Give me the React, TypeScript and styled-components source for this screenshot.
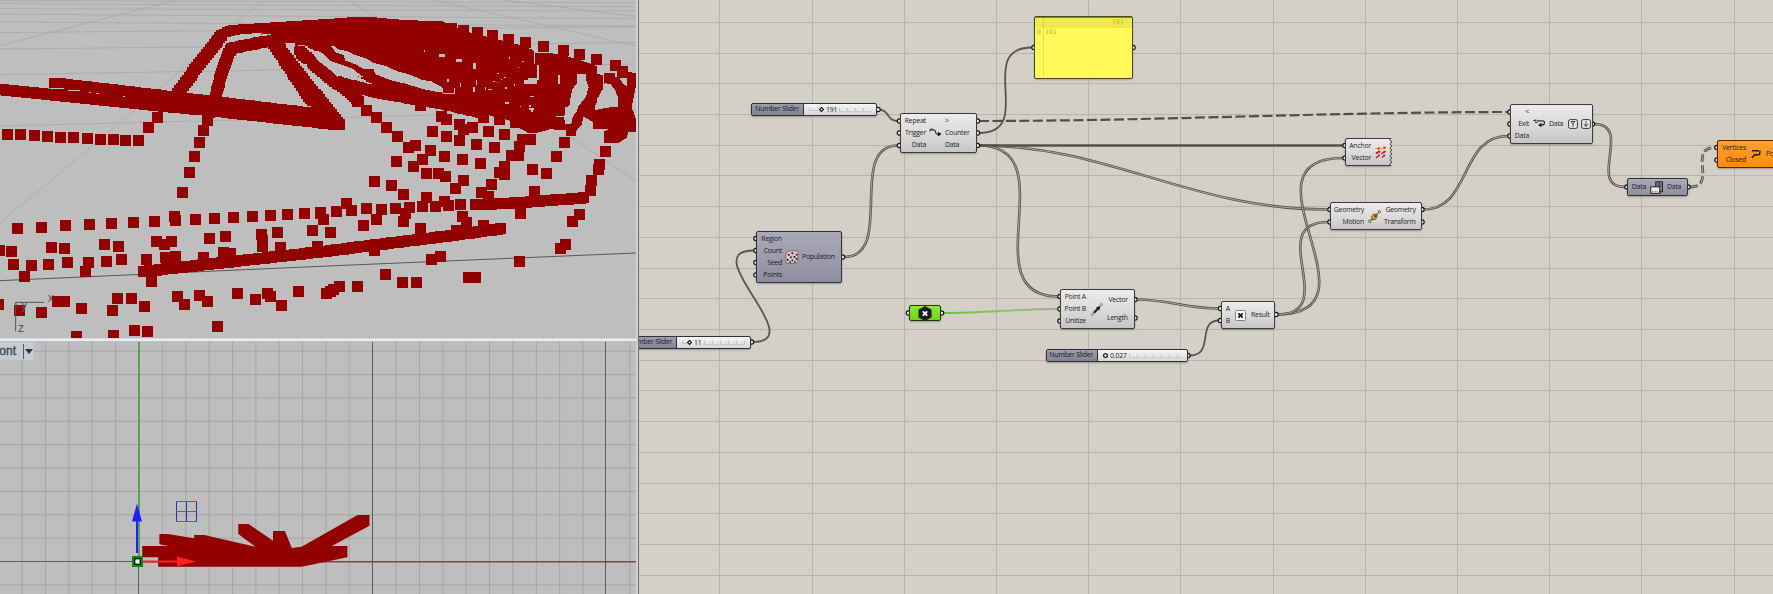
import React from "react";
import styled, { createGlobalStyle, css } from "styled-components";

const GlobalStyle = createGlobalStyle`
  html, body { margin: 0; padding: 0; overflow: hidden; }
  body { background: #d4d0c8; font-family: "Open Sans", "Noto Sans", sans-serif; }
`;

const Screen = styled.div`
  display: flex;
  width: 1773px;
  height: 594px;
  overflow: hidden;
`;

const Viewports = styled.div`
  display: flex;
  flex-direction: column;
  flex: none;
  width: 636px;
  border-right: 2px solid #cfd3da;
  background: #bebebe;
`;

const PerspectiveView = styled.div`
  height: 338px;
  flex: none;
  overflow: hidden;
  border-bottom: 1px solid #d3d7df;
  svg { display: block; }
`;

const FrontView = styled.div`
  flex: 1;
  overflow: hidden;
  position: relative;
  border-top: 2px solid #e9edf5;
  svg { display: block; }
`;

const ViewTab = styled.div`
  position: absolute;
  left: 0;
  top: 1px;
  display: flex;
  align-items: center;
  width: 34px;
  height: 18px;
  background: #c5cad3;
  border-radius: 0 0 3px 0;
  color: #46484d;
  font: 12px "Liberation Sans", Arial, sans-serif;
  -webkit-text-stroke: 0.4px #46484d;
`;

const TabName = styled.span`
  width: 16px;
  margin-right: 7px;
  display: flex;
  justify-content: flex-end;
  white-space: nowrap;
`;

const TabArrow = styled.span`
  height: 15px;
  border-left: 1px solid #55585e;
  display: flex;
  align-items: center;
  &::after {
    content: "";
    margin-left: 1px;
    border: 4px solid transparent;
    border-top: 5px solid #333;
    border-bottom: 0;
  }
`;

const Canvas = styled.div`
  position: relative;
  flex: 1;
  overflow: hidden;
  border-left: 1px solid #6c6c6c;
  background: #d4d0c8;
`;

const Stage = styled.div`
  position: absolute;
  left: -639px;
  top: 0;
  width: 1773px;
  height: 594px;
`;

const WireLayer = styled.svg`
  position: absolute;
  left: 0;
  top: 0;
`;

type Tone = "light" | "selected" | "warning" | "green";

const tones = {
  light: css`background: linear-gradient(#ececec, #d8d8d8 60%, #c6c6c6); border-color: #3c3c3c;`,
  selected: css`background: linear-gradient(#a9a9b7, #9a9aaa 60%, #8d8d9d); border-color: #30303a;`,
  warning: css`background: linear-gradient(#ffa02c, #ff8c10); border-color: #6b1a00;`,
  green: css`background: linear-gradient(#8ee83a, #6fd414); border-color: #1e3a05;`,
};

const NodeBox = styled.div<{ $x: number; $y: number; $w: number; $h: number; $tone: Tone; $cols: string }>`
  position: absolute;
  box-sizing: border-box;
  left: ${(p) => p.$x}px;
  top: ${(p) => p.$y}px;
  width: ${(p) => p.$w}px;
  height: ${(p) => p.$h}px;
  display: grid;
  grid-template-columns: ${(p) => p.$cols};
  align-items: center;
  border: 1px solid;
  border-radius: 2px;
  box-shadow: 0 1px 2px rgba(0, 0, 0, 0.28);
  ${(p) => tones[p.$tone]}
`;

const Params = styled.div<{ $align: "flex-start" | "flex-end" }>`
  display: flex;
  flex-direction: column;
  align-items: ${(p) => p.$align};
`;

const Param = styled.span<{ $h?: number }>`
  height: ${(p) => p.$h ?? 12.2}px;
  line-height: ${(p) => p.$h ?? 12.2}px;
  font-size: 6.9px;
  letter-spacing: -0.22px;
  color: #1d1d1d;
  white-space: nowrap;
`;

const IconSlot = styled.div`
  display: flex;
  justify-content: center;
  svg { display: block; overflow: visible; }
`;

const Toggles = styled.div`
  display: flex;
  gap: 3px;
  margin-left: 5px;
`;

const Row = styled.div`
  display: flex;
  align-items: center;
`;

const SliderBox = styled.div<{ $x: number; $y: number; $w: number }>`
  position: absolute;
  box-sizing: border-box;
  left: ${(p) => p.$x}px;
  top: ${(p) => p.$y}px;
  width: ${(p) => p.$w}px;
  height: 13px;
  display: flex;
  border: 1px solid #303036;
  border-radius: 2px;
  background: linear-gradient(#f6f6f6, #d6d6d6);
  box-shadow: 0 1px 2px rgba(0, 0, 0, 0.28);
`;

const SliderName = styled.div<{ $w: number }>`
  flex: none;
  box-sizing: border-box;
  width: ${(p) => p.$w}px;
  padding-right: 4px;
  display: flex;
  justify-content: flex-end;
  border-right: 1px solid #303036;
  background: linear-gradient(#9c9cad, #82828f);
  font-size: 6.9px;
  letter-spacing: -0.22px;
  line-height: 10.5px;
  color: #1b1b20;
  white-space: nowrap;
`;

const SliderTrack = styled.div`
  flex: 1;
  display: flex;
  align-items: center;
  padding: 0 5px;
  svg { flex: none; }
`;

const SliderValue = styled.span`
  font-size: 6.9px;
  letter-spacing: -0.15px;
  line-height: 10px;
  color: #222;
  margin: 0 2px 0 2px;
`;

const Ruler = styled.div`
  flex: 1;
  height: 3px;
  border-bottom: 1px solid #cacaca;
  background: repeating-linear-gradient(90deg, #c0c0c0 0 1px, transparent 1px 8px);
`;

const YellowPanel = styled.div`
  position: absolute;
  box-sizing: border-box;
  left: 1034px;
  top: 16px;
  width: 99px;
  height: 63px;
  border: 1px solid #4a4718;
  border-radius: 2px;
  background: linear-gradient(90deg, transparent 8px, #e6e150 8px 9px, transparent 9px), #fff95a;
  box-shadow: 0 1px 2px rgba(0, 0, 0, 0.2);
  font: 6.6px "DejaVu Sans Mono", monospace;
  color: #c2bb3c;
`;

const PanelHead = styled.div`
  height: 11px;
  line-height: 8px;
  padding-right: 8px;
  text-align: right;
  background: rgba(160, 150, 0, 0.16);
  border-top: 1px solid #85803a;
  box-sizing: border-box;
`;

const PanelLine = styled.div`
  padding-left: 2px;
  line-height: 8px;
  white-space: pre;
`;

/* ---------- perspective point cloud, in thirds of a pixel ---------- */

type Pt = [number, number];
const RED = "#930000";
const GREY = "#bebebe";

const leftPoints: Pt[] = [
  [472,352],[445,382],[22,403],[61,403],[103,406],[142,409],[181,412],[220,412],[262,415],[301,418],[340,418],[376,421],[415,421],
  [622,362],[610,391],[598,427],[583,469],[568,517],[547,577],
  [52,685],[124,682],[196,676],[268,673],[334,670],[400,667],[463,664],[523,649],[526,661],[586,658],[643,655],[700,652],[757,649],[811,646],[862,643],[913,640],[961,637],
  [-2,751],[34,754],[154,742],[193,745],[313,733],[355,739],[469,724],[493,733],[514,724],[628,715],[676,709],[784,703],[787,720],[787,740],[832,697],[938,690],
  [40,793],[94,796],[145,793],[202,787],[265,787],[256,814],[319,784],[364,778],[73,829],[439,778],[454,844],[497,772],[526,769],[610,772],[670,757],[690,760],[841,742],[952,740],
  [-5,912],[58,932],[124,938],[172,904],[193,904],[244,925],[352,895],[394,895],[337,931],[433,919],[229,1009],[340,1006],[403,991],[442,994],
  [532,889],[553,913],[598,886],[622,904],[712,880],[766,898],[802,880],[811,889],[844,916],[895,874],[652,979],
];

const rightPoints: Pt[] = [
  [353,80],[395,84],[430,91],[473,97],[517,107],[565,118],[616,127],[670,139],[730,151],[778,163],[829,178],[886,197],[908,213],[868,236],
  [113,305],[140,330],[170,352],[200,381],[232,408],[265,442],[286,435],[331,451],[307,478],[280,499],[229,484],[319,520],[355,520],[376,529],[430,541],[406,565],
  [365,350],[380,357],[418,373],[430,387],[457,382],[337,394],[379,409],[418,421],[505,394],[553,403],[469,433],[523,442],[373,469],[427,478],[481,490],
  [163,544],[214,556],[250,583],[319,592],[514,553],[484,577],[505,588],[552,500],[537,518],[553,522],[575,465],[594,465],[598,440],[607,418],[630,418],
  [637,508],[679,520],[709,469],[733,427],[643,573],[601,640],[778,643],[757,664],[736,733],[721,745],[598,784],[361,769],[334,778],[196,823],[247,847],[289,847],[445,832],[466,832],[112,859],[58,859],[40,868],[20,880],[30,873],
  [79,610],[94,631],[49,634],[139,625],[184,628],[169,658],[226,625],[268,622],[255,640],[250,664],[307,619],[346,619],[373,604],[385,615],[421,613],[427,650],[438,668],[490,676],[31,697],[130,676],[0,640],[10,658],[301,685],[163,752],[410,690],
  [302,317],[855,453],[838,493],[834,507],[815,542],[811,570],[636,382],[655,376],[585,367],[538,357],[490,352],
];

const sweeps: Pt[][] = [
  [[-10,266],[480,316],[630,330],[1018,373]],
  [[161,248],[660,306],[920,337],[1018,373]],
  [[532,278],[600,185],[664,104],[700,90],[960,74],[1085,65],[1180,73],[1310,80]],
  [[645,290],[665,210],[692,143],[800,122],[960,115]],
  [[622,345],[645,290]],
  [[815,122],[935,303],[1000,370]],
  [[830,125],[839,150],[912,243],[975,320],[1018,373]],
  [[896,152],[945,194],[1010,248],[1050,275],[1073,302]],
  [[896,152],[945,194],[1015,247],[1130,275],[1170,283],[1330,310],[1440,335]],
  [[930,120],[1010,172],[1090,213],[1170,258],[1330,292],[1440,318],[1560,350],[1690,372]],
  [[1425,613],[1560,606],[1750,592]],
  [[428,813],[960,754],[1330,708],[1500,685]],
];

const massShapes = [
  "790,110 960,62 1085,50 1185,60 1330,66 1400,95 1560,135 1600,150 1610,200 1600,230 1615,250 1620,360 1440,330 1350,290 1340,282 1190,235 1010,155 905,130",
];

const farShape =
  "955,158 1010,168 1055,182 1100,198 1100,222 1118,225 1118,268 1102,296 1097,320 1140,322 1165,322 1165,295 1155,270 1140,250 1122,250 1122,220 1155,220 1155,230 1190,232 1182,212 1217,220 1217,262 1205,322 1217,355 1217,395 1195,397 1190,415 1165,428 1122,428 1122,395 1135,388 1088,388 1088,365 1060,350 1055,375 1040,390 1038,408 1008,408 1008,390 960,388 930,396 895,398 850,375 850,160";

const gaps = [
  "243,150 270,155 285,165 300,182 340,196 370,207 385,220 400,231 355,226 320,230 300,210 262,180",
  "303,138 312,138 325,148 350,153 368,162 408,176 435,190 465,197 500,213 540,224 578,240 604,244 640,264 640,278 610,274 575,266 530,252 480,240 435,222 432,208 400,206 375,192 345,182 342,165 318,158",
  "1040,222 1068,222 1068,240 1076,262 1068,290 1046,318 1040,334 1028,350 1024,372 1006,372 1002,352 975,350 1005,346 1005,322 1018,318 1022,290 1027,268 1040,250",
  "1126,250 1143,252 1150,270 1160,290 1163,320 1140,322 1095,330 1095,320 1105,296 1118,290",
  "1168,234 1192,234 1190,258 1180,252",
];

const holes: [number, number, number, number][] = [
  [1316,162,20,9],[1368,177,18,8],[1419,188,8,18],[1340,237,6,10],[1330,278,34,4],[1362,264,3,16],[1380,250,4,10],[1419,261,6,14],
  [1601,160,4,32],[1610,196,6,38],[1584,233,34,8],[1572,241,40,12],[1514,306,14,5],[1586,315,6,6],[1587,325,16,4],[1592,329,8,7],[1674,225,5,26],
  [1272,150,3,6],[1455,262,3,8],[1465,267,10,3],[1492,218,4,5],[1527,170,3,6],[1567,183,4,4],[1516,262,4,4],[1543,252,3,5],
  [1478,243,8,3],[1490,246,4,3],[1502,236,5,3],[1512,230,6,3],[1554,200,3,3],[1560,318,3,3],[1428,240,3,14],[1590,288,12,3],
];

const DOT = 33;

function dotPath([x, y]: Pt) {
  return `M${x - DOT / 2} ${y - DOT / 2}h${DOT}v${DOT}h${-DOT}z`;
}

function sweepPath(points: Pt[]) {
  let d = "";
  for (let i = 0; i < points.length - 1; i++) {
    const [x1, y1] = points[i];
    const [x2, y2] = points[i + 1];
    const n = Math.max(1, Math.ceil(Math.hypot(x2 - x1, y2 - y1) / 10));
    for (let k = 0; k <= n; k++) {
      d += dotPath([Math.round((x1 + ((x2 - x1) * k) / n) / 3) * 3 + 1, Math.round((y1 + ((y2 - y1) * k) / n) / 3) * 3 + 1]);
    }
  }
  return d;
}

const horizon: [number, number][] = [[2, 8], [11, 20], [26, 33], [42, 56], [66, 78], [98, 80], [147, 128], [224, 192], [378, 330]];

function PointCloud() {
  return (
    <svg width="636" height="338" viewBox="0 0 1908 1014">
      <g stroke="#aaaaaa" strokeWidth="2.6" fill="none">
        {horizon.map(([a, b]) => <path key={a} d={`M0 ${a}L1908 ${b}`} />)}
        <path d="M0 668L275 440L790 0M0 137L530 0M1045 0L1125 50M1300 0L1908 138M1510 0L1908 50M1710 410L1908 543" />
      </g>
      <path d="M0 842L960 799L1908 759" stroke="#585858" strokeWidth="3" fill="none" />
      <g fill={RED} shapeRendering="crispEdges">
        {massShapes.map((m) => <polygon key={m} points={m} />)}
        <polygon points={farShape} transform="translate(690 0)" />
        {sweeps.map((s, i) => <path key={i} d={sweepPath(s)} />)}
        <path d={leftPoints.map(dotPath).join("")} />
        <path d={rightPoints.map(([x, y]) => dotPath([x + 960, y])).join("")} />
      </g>
      <g fill={GREY} shapeRendering="crispEdges">
        {holes.map(([x, y, w, h]) => <rect key={`${x}-${y}`} x={x} y={y} width={w} height={h} />)}
        <g transform="translate(690 0)">
          {gaps.map((g) => <polygon key={g} points={g} />)}
        </g>
        <path d="M150 265h42v3h-42zM205 270h36v3h-36zM266 277h8v3h-8zM288 279h8v3h-8zM368 289h8v3h-8zM918 318h14v3h-14z" />
        <path d="M680 124L682 112L715 104L785 98L785 103L720 115Z" />
        <path d="M855 129h29v12h-9v12h-6v-8h-7z" />
        <path d="M883 166h4v6h-4zM890 176h4v6h-4zM900 184h4v6h-4zM908 192h12v8h-12z" />
      </g>
      <g stroke="#555" strokeWidth="3" fill="none">
        <path d="M47 994V907H132" />
        <path d="M47 910L60 922" strokeWidth="2" />
      </g>
      <g fill="#555" fontFamily="Liberation Sans, Arial, sans-serif" fontSize="36">
        <text x="143" y="905">x</text>
        <text x="64" y="926">y</text>
        <text x="54" y="996">z</text>
      </g>
    </svg>
  );
}

/* ---------- front view ---------- */

const FRONT_STEP = 23.37;

function FrontDrawing() {
  const cols = Array.from({ length: 27 }, (_, i) => i - 5).filter((i) => i % 10 !== 0);
  const rows = Array.from({ length: 11 }, (_, i) => i - 9).filter((i) => i !== 0);
  return (
    <svg width="636" height="253" viewBox="0 341 636 253">
      <g stroke="#a6a6a6" strokeWidth="1">
        {cols.map((i) => <line key={i} x1={139 + i * FRONT_STEP} x2={139 + i * FRONT_STEP} y1="342" y2="594" />)}
        {rows.map((i) => <line key={i} x1="0" x2="636" y1={561.5 + i * FRONT_STEP} y2={561.5 + i * FRONT_STEP} />)}
      </g>
      <path d="M372.5 342V594M605.5 342V594M138.5 562V594M0 561.5H138" stroke="#5c5c5c" fill="none" />
      <path d="M139 342V561" stroke="#3f9a3a" strokeWidth="1.6" />
      <path d="M139 561.7H636" stroke="#8a4141" strokeWidth="1.6" />
      <polygon
        fill={RED}
        transform="translate(0 330) scale(0.4087 0.33333)"
        points="390,612 410,612 475,625 475,615 500,615 625,650 583,612 583,582 608,582 668,632 668,603 697,603 714,654 738,650 875,555 904,555 904,587 812,648 850,648 850,682 738,710 387,710 387,682 348,682 348,648 412,648 390,643"
      />
      <path d="M176.5 501.5V521.5M186.5 501.5V521.5M196.5 501.5V521.5" stroke="#3028c4" fill="none" />
      <path d="M176 501.5H197M176 511.5H197M176 521.5H197" stroke="#d8324a" fill="none" />
      <path d="M137 553V520" stroke="#2020ff" strokeWidth="2" />
      <path d="M137 503.5L142 521.5H132Z" fill="#2020ff" />
      <path d="M143 561.5H180" stroke="#ff2020" strokeWidth="2" />
      <path d="M196 561.5L177 566.5V556.5Z" fill="#ff2020" />
      <rect x="133" y="557" width="9" height="9" fill="#fff" stroke="#078a07" strokeWidth="2" />
      <rect x="134.700" y="558.700" width="5.600" height="5.600" fill="#fff" stroke="#0c1a0c" strokeWidth="1.400" />
    </svg>
  );
}

/* ---------- wires ---------- */

const doubleWires = [
  "M844 257C896 257 846 145.5 898 145.5",
  "M979 145.5C1110 145.5 1190 209.5 1328 209.5",
  "M979 145.5C1068 145.5 970 296.5 1058 296.5",
  "M1136 299.5C1170 299.5 1185 308.5 1219 308.5",
  "M1277 314.5C1388 314.5 1232 158 1343 158",
  "M1277 314.5C1342 314.5 1263 222 1328 222",
  "M1423 209.5C1472 209.5 1459 136 1508 136",
  "M1594 124C1634 124 1586 187 1625 187",
];
const singleWires = [
  "M878 109.5C890 109.5 886 121 898 121",
  "M752 342C812 342 694 250.5 754 250.5",
  "M979 133C1037 133 974 47.5 1032 47.5",
  "M1190 355.5C1215 355.5 1196 320.5 1219 320.5",
];

const ports: Pt[] = [
  [878,109.5],[899.5,121],[899.5,133],[899.5,145.5],[977.5,121],[977.5,133],[977.5,145.5],
  [756,238.5],[756,250.5],[756,262.5],[756,275],[842.5,257],[751.5,342],[908.5,313],[941.5,313],
  [1034,47.5],[1133,47.5],[1060,296.5],[1060,309],[1060,321],[1135,299.5],[1135,318],
  [1220.5,308.5],[1220.5,320.5],[1276,314.5],[1188,355.5],[1345,145.5],[1345,158],[1330,209.5],[1330,222],[1422,209.5],[1422,222],
  [1510,112],[1510,124],[1510,136],[1592.5,124],[1627,187],[1688,187],[1717,147.5],[1717,160],
];

function Wires() {
  const cols = Array.from({ length: 12 }, (_, i) => Math.round(719.3 + i * 92.2) + 0.5);
  const rows = Array.from({ length: 19 }, (_, i) => Math.floor(22.3 + i * 30.72) + 0.5);
  return (
    <WireLayer width="1773" height="594" viewBox="0 0 1773 594">
      <defs>
        <linearGradient id="fade" x1="0" x2="1">
          <stop offset="0" stopColor="#6cc62c" />
          <stop offset="0.55" stopColor="#8cc562" />
          <stop offset="1" stopColor="#a3a596" />
        </linearGradient>
      </defs>
      <g stroke="#b9b5ae">
        {cols.map((x) => <line key={x} x1={x} x2={x} y1="0" y2="594" />)}
        {rows.map((y) => <line key={y} x1="638" x2="1773" y1={y} y2={y} />)}
      </g>
      <g fill="none">
        {doubleWires.map((d) => (
          <g key={d}>
            <path d={d} stroke="#55504b" strokeWidth="2.6" />
            <path d={d} stroke="#b4afa7" strokeWidth="0.9" />
          </g>
        ))}
        <path d="M979 145.5H1343" stroke="#55504b" strokeWidth="2.6" />
        {singleWires.map((d) => <path key={d} d={d} stroke="#5c5650" strokeWidth="1.8" />)}
        <path d="M979 121C1154 121 1333 112 1508 112" stroke="#524d48" strokeWidth="2.200" strokeDasharray="10 3.500" />
        <path d="M1690 187C1718 187 1687 147.5 1715 147.5" stroke="#55504b" strokeWidth="2.8" strokeDasharray="8 3" />
        <path d="M1690 187C1718 187 1687 147.5 1715 147.5" stroke="#bbb6ae" strokeWidth="0.9" strokeDasharray="8 3" />
        <path d="M943 313C985 313 1015 309 1058 309" stroke="url(#fade)" strokeWidth="1.8" />
      </g>
      <g fill="#f4f4f4" stroke="#161616" strokeWidth="1.2">
        {ports.map(([x, y]) => <circle key={`${x}-${y}`} cx={x} cy={y} r="2.2" />)}
      </g>
    </WireLayer>
  );
}

/* ---------- icons ---------- */

const LoopStartIcon = () => (
  <svg width="13" height="12" viewBox="0 0 13 12" fill="none">
    <path d="M1 4.500C.5 2 2 1.500 4 2.600L5.500 3.200C7 3.500 6 6 7.500 7H9.500" stroke="#333" strokeWidth="1.200" />
    <path d="M5 3L1.200 3.800" stroke="#777" />
    <path d="M8.800 4.800L12.600 7L8.800 9.600Z" fill="#151515" />
  </svg>
);

const LoopEndIcon = () => (
  <svg width="13" height="12" viewBox="0 0 13 12" fill="none">
    <path d="M.5 2.700L3.500 2.200M2 4.500H4.500M4 2.800L10.500 3Q12.500 4.500 10.500 6.800H8" stroke="#222" strokeWidth="1.200" />
    <path d="M8.500 4.700V9.300L5 7Z" fill="#151515" />
  </svg>
);

const PopulateIcon = () => (
  <svg width="14" height="14" viewBox="0 0 14 14">
    <path d="M1 3L4 .8H13V11L10.500 13.300H1Z" fill="#d6d0d0" stroke="#a93b36" strokeWidth=".8" />
    <path d="M1 3H10.500V13M10.500 3L13 1" fill="none" stroke="#c98783" strokeWidth=".5" />
    <path d="M3 4h1.700v1.700H3zM6.500 2.500h1.700v1.700H6.500zM5 6.500h1.700v1.700H5zM8.500 6h1.700v1.700H8.500zM2 9h1.700v1.700H2zM6.500 9.500h1.700v1.700H6.500zM10.800 8h1.500v1.700h-1.500zM11 4h1.500v1.500H11zM4.500 11.300H6v1.500H4.500zM9 11.300h1.500v1.300H9z" fill="#1b1b1b" />
  </svg>
);

const VectorIcon = () => (
  <svg width="12" height="13" viewBox="0 0 12 13">
    <path d="M1.500 11.500L10 2" stroke="#777" strokeWidth=".8" />
    <path d="M3 9.800L6.500 6" stroke="#111" strokeWidth="2" />
    <path d="M9.300 3L8.300 7.500L5 4.500Z" fill="#111" />
    <circle cx="1.500" cy="11.500" r="1.100" fill="#ddd" stroke="#666" strokeWidth=".7" />
    <circle cx="10.300" cy="1.800" r="1.200" fill="#ddd" stroke="#666" strokeWidth=".7" />
  </svg>
);

const MoveIcon = () => (
  <svg width="13" height="13" viewBox="0 0 13 13">
    <path d="M1.800 11.200L11.300 2" stroke="#444" strokeWidth=".9" />
    <path d="M3.800 6.500L5.500 4.300H9V7.300L7 9.500H3.800Z" fill="#eaa41c" stroke="#4d3503" strokeWidth=".8" />
    <path d="M8.600 4.600L5.800 6L7.700 7.800Z" fill="#5b3b00" />
    <circle cx="1.800" cy="11.300" r="1.300" fill="#ddd" stroke="#444" strokeWidth=".8" />
    <circle cx="11.300" cy="1.800" r="1.300" fill="#ddd" stroke="#444" strokeWidth=".8" />
  </svg>
);

const VectorDisplayIcon = () => (
  <svg width="12" height="13" viewBox="0 0 12 13" strokeWidth="1.100" fill="none">
    <path d="M.3 2.500H4M6.300 3L9 1.800" stroke="#dd8436" />
    <path d="M.8 7.500L3.500 6M6.300 7.800L9 6.200M1.200 12L3.500 9.800M6.800 11.500L8.800 9.800" stroke="#b81c2b" strokeWidth="1.500" />
    <path d="M3 .8L5.800 2.500L3 4.200zM8 .5L11.300 .8L9.500 3.500z" fill="#d2452b" />
    <path d="M2.500 4.800L5.800 5L4.200 7.600zM8 4.800L11.300 4.900L9.700 7.600zM2.500 8.600L5 8.400L4.300 11zM7.800 8.800L10.500 8.400L9.500 11z" fill="#c01a30" />
  </svg>
);

const MultiplyIcon = () => (
  <svg width="11" height="11" viewBox="0 0 11 11">
    <rect x=".5" y=".5" width="10" height="10" rx="1" fill="#fff" stroke="#777" strokeWidth=".9" />
    <path d="M3.300 3.300L7.700 7.700M7.700 3.300L3.300 7.700" stroke="#111" strokeWidth="1.700" />
  </svg>
);

const PointIcon = () => (
  <svg width="14" height="15" viewBox="0 0 14 15">
    <path d="M7 .8L12.800 4.200V10.800L7 14.200L1.200 10.800V4.200Z" fill="#1b1b1b" stroke="#1b1b1b" strokeWidth="1.500" strokeLinejoin="round" />
    <path d="M4.800 5.300L9.200 9.700M9.200 5.300L4.800 9.700" stroke="#fff" strokeWidth="1.900" />
  </svg>
);

const DataIcon = () => (
  <svg width="13" height="13" viewBox="0 0 13 13">
    <rect x="5.800" y=".8" width="6.600" height="10" fill="#8b8b96" stroke="#1a1a1a" strokeWidth="1" />
    <path d="M7 3H11.500M7 5H11.500M9.200 1V8" stroke="#3a3a42" strokeWidth=".8" fill="none" />
    <rect x=".7" y="5.800" width="9" height="6.500" fill="#efe6e1" stroke="#222" strokeWidth="1" />
    <path d="M2 10.500H8.500" stroke="#a98a82" strokeWidth="1" strokeDasharray="1 .6" />
  </svg>
);

const PolylineIcon = () => (
  <svg width="12" height="11" viewBox="0 0 12 11" fill="none">
    <path d="M1.500 1.800H10L9.500 5.500L4.500 6L1.500 9.200" stroke="#2b1c05" strokeWidth="1.500" />
    <path d="M1 1.500h1M9.300 1.500h1.200M1 9.500h1" stroke="#dcc08a" strokeWidth="1.500" />
  </svg>
);

const ToggleIcon = ({ d }: { d: string }) => (
  <svg width="10" height="10" viewBox="0 0 10 10" fill="none" stroke="#3a3a3a">
    <rect x=".6" y=".6" width="8.800" height="8.800" rx="1.600" fill="#e8e8e8" strokeWidth="1" />
    <path d={d} strokeWidth=".9" />
  </svg>
);

/* ---------- nodes ---------- */

type NodeProps = {
  box: [number, number, number, number];
  cols: string;
  tone?: Tone;
  inputs?: string[];
  outputs?: string[];
  outHeight?: number;
  outAlign?: "flex-start" | "flex-end";
  extra?: React.ReactNode;
  children: React.ReactNode;
};

function Node({ box, cols, tone = "light", inputs = [], outputs = [], outHeight, outAlign = "flex-start", extra, children }: NodeProps) {
  return (
    <NodeBox $x={box[0]} $y={box[1]} $w={box[2]} $h={box[3]} $tone={tone} $cols={cols}>
      <Params $align="flex-end">
        {inputs.map((label) => <Param key={label}>{label}</Param>)}
      </Params>
      <IconSlot>{children}</IconSlot>
      <Row>
        <Params $align={outAlign}>
          {outputs.map((label) => <Param key={label} $h={outHeight}>{label}</Param>)}
        </Params>
        {extra}
      </Row>
    </NodeBox>
  );
}

type SliderProps = { x: number; y: number; w: number; name: number; value: string; lead?: number; round?: boolean };

function Slider({ x, y, w, name, value, lead = 0, round }: SliderProps) {
  return (
    <SliderBox $x={x} $y={y} $w={w}>
      <SliderName $w={name}>Number Slider</SliderName>
      <SliderTrack>
        <svg width={lead + 5} height="7" viewBox={`0 0 ${lead + 5} 7`} fill="#fff" stroke="#151515">
          {lead > 0 && <path d={`M.5 1.500V4.500M0 4.500H${lead}`} stroke="#c4c4c4" />}
          {round
            ? <circle cx={lead + 2.5} cy="3.5" r="1.9" strokeWidth="1.2" />
            : <path d={`M${lead + 2.5} 1.500l2 2l-2 2l-2-2z`} strokeWidth="1.1" />}
        </svg>
        <SliderValue>{value}</SliderValue>
        <Ruler />
      </SliderTrack>
    </SliderBox>
  );
}

const TornEdge = styled.svg`
  position: absolute;
  left: 1389px;
  top: 137px;
`;

function Definition() {
  return (
    <Canvas>
      <Stage>
        <Wires />
        <Slider x={751} y={103} w={126} name={52} value="191" lead={10} />
        <Slider x={620} y={336} w={131} name={56} value="11" lead={5} />
        <Slider x={1046} y={349} w={142} name={51} value="0.027" round />

        <Node box={[900, 113, 77, 40]} cols="25px 19px auto" inputs={["Repeat", "Trigger", "Data"]} outputs={[">", "Counter", "Data"]}>
          <LoopStartIcon />
        </Node>
        <Node box={[756, 231, 86, 52]} cols="25px 20px auto" tone="selected" inputs={["Region", "Count", "Seed", "Points"]} outputs={["Population"]}>
          <PopulateIcon />
        </Node>
        <Node box={[909, 305, 32, 16]} cols="0 30px 0" tone="green"><PointIcon /></Node>
        <Node box={[1060, 289, 75, 40]} cols="25px 21px auto" inputs={["Point A", "Point B", "Unitize"]} outputs={["Vector", "Length"]} outHeight={18.4} outAlign="flex-end">
          <VectorIcon />
        </Node>
        <Node box={[1221, 301, 54, 28]} cols="8px 21px auto" inputs={["A", "B"]} outputs={["Result"]}><MultiplyIcon /></Node>
        <Node box={[1345, 138, 47, 28]} cols="25px 19px 0" inputs={["Anchor", "Vector"]}><VectorDisplayIcon /></Node>
        <TornEdge width="4" height="30" viewBox="0 0 4 30">
          <path d="M4 0L2 1L.8 3L2.800 5L.8 7L2.800 9L.8 11L2.800 13L.8 15L2.800 17L.8 19L2.800 21L.8 23L2.800 25L.8 27L2 29L4 30Z" fill="#d4d0c8" />
          <path d="M2 1L.8 3L2.800 5L.8 7L2.800 9L.8 11L2.800 13L.8 15L2.800 17L.8 19L2.800 21L.8 23L2.800 25L.8 27L2 29" fill="none" stroke="#333" strokeWidth=".9" />
        </TornEdge>
        <Node box={[1330, 202, 92, 28]} cols="33px 20px auto" inputs={["Geometry", "Motion"]} outputs={["Geometry", "Transform"]} outAlign="flex-end"><MoveIcon /></Node>
        <Node
          box={[1510, 104, 83, 40]}
          cols="18px 20px auto"
          inputs={["<", "Exit", "Data"]}
          outputs={["Data"]}
          extra={
            <Toggles>
              <ToggleIcon d="M3 2.500L5 5V8M7 2.500L5 5M3 2.500H7" />
              <ToggleIcon d="M5 2V7.500M2.800 5L5 7.500L7.200 5" />
            </Toggles>
          }
        >
          <LoopEndIcon />
        </Node>
        <Node box={[1627, 178, 61, 18]} cols="18px 21px auto" tone="selected" inputs={["Data"]} outputs={["Data"]}><DataIcon /></Node>
        <Node box={[1717, 140, 80, 28]} cols="28px 20px auto" tone="warning" inputs={["Vertices", "Closed"]} outputs={["Polyline"]}><PolylineIcon /></Node>
        <YellowPanel>
          <PanelHead>{"{0}"}</PanelHead>
          <PanelLine>0 191</PanelLine>
        </YellowPanel>
      </Stage>
    </Canvas>
  );
}

export default function App() {
  return (
    <Screen>
      <GlobalStyle />
      <Viewports>
        <PerspectiveView><PointCloud /></PerspectiveView>
        <FrontView>
          <FrontDrawing />
          <ViewTab><TabName>ont</TabName><TabArrow /></ViewTab>
        </FrontView>
      </Viewports>
      <Definition />
    </Screen>
  );
}
